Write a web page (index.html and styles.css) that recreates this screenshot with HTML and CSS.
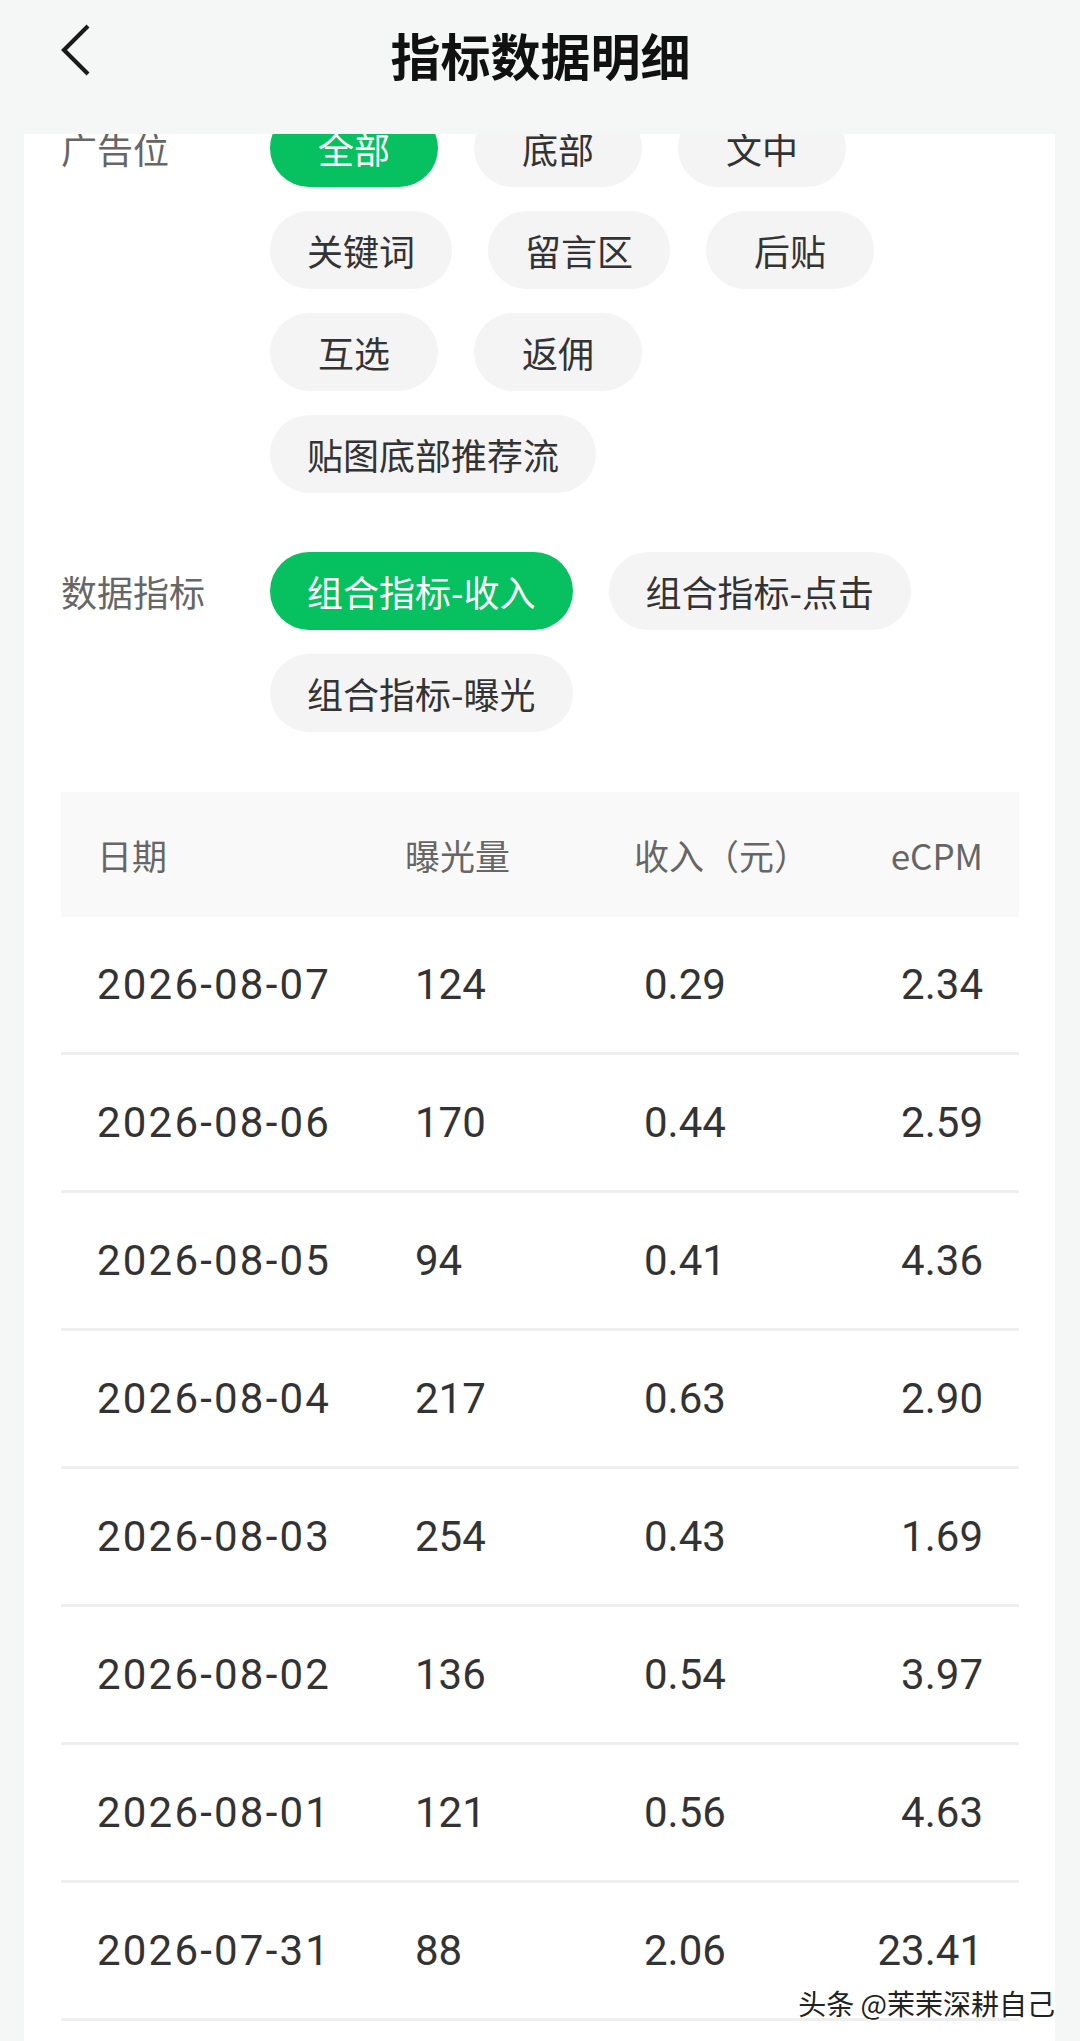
FILE: index.html
```html
<!DOCTYPE html>
<html lang="zh">
<head>
<meta charset="utf-8">
<title>指标数据明细</title>
<link rel="stylesheet" href="styles.css">
</head>
<body>
<header class="topbar">
  <div class="back">
    <svg width="32" height="54" viewBox="0 0 32 54"><path d="M27 2 L3 26 L27 50" fill="none" stroke="#1a1a1a" stroke-width="4.2" stroke-linecap="butt" stroke-linejoin="miter"/></svg>
  </div>
  <h1 class="title">指标数据明细</h1>
  <div class="spacer"></div>
</header>
<main class="card">
  <div class="content">
    <section class="filter">
      <div class="label">广告位</div>
      <div class="pills">
        <span class="pill active">全部</span>
        <span class="pill">底部</span>
        <span class="pill">文中</span>
        <span class="pill">关键词</span>
        <span class="pill">留言区</span>
        <span class="pill">后贴</span>
        <span class="pill">互选</span>
        <span class="pill">返佣</span>
        <span class="pill">贴图底部推荐流</span>
      </div>
    </section>
    <section class="filter second">
      <div class="label">数据指标</div>
      <div class="pills">
        <span class="pill active">组合指标-收入</span>
        <span class="pill">组合指标-点击</span>
        <span class="pill">组合指标-曝光</span>
      </div>
    </section>
    <section class="table">
      <div class="thead">
        <span>日期</span><span>曝光量</span><span>收入（元）</span><span class="r">eCPM</span>
      </div>
      <div class="row"><span class="date">2026-08-07</span><span>124</span><span>0.29</span><span class="r">2.34</span></div>
      <div class="row"><span class="date">2026-08-06</span><span>170</span><span>0.44</span><span class="r">2.59</span></div>
      <div class="row"><span class="date">2026-08-05</span><span>94</span><span>0.41</span><span class="r">4.36</span></div>
      <div class="row"><span class="date">2026-08-04</span><span>217</span><span>0.63</span><span class="r">2.90</span></div>
      <div class="row"><span class="date">2026-08-03</span><span>254</span><span>0.43</span><span class="r">1.69</span></div>
      <div class="row"><span class="date">2026-08-02</span><span>136</span><span>0.54</span><span class="r">3.97</span></div>
      <div class="row"><span class="date">2026-08-01</span><span>121</span><span>0.56</span><span class="r">4.63</span></div>
      <div class="row"><span class="date">2026-07-31</span><span>88</span><span>2.06</span><span class="r">23.41</span></div>
    </section>
  </div>
</main>
<div class="watermark">头条 @茉茉深耕自己</div>
</body>
</html>
```
FILE: styles.css
```css
* { box-sizing: border-box; }
html, body { margin: 0; padding: 0; }
body {
  width: 1080px;
  height: 2041px;
  overflow: hidden;
  position: relative;
  background: #f5f6f6;
  font-family: "Noto Sans CJK SC", "Noto Sans", sans-serif;
  display: flex;
  flex-direction: column;
}
.topbar {
  height: 134px;
  flex: none;
  display: grid;
  grid-template-columns: 1fr auto 1fr;
  align-items: start;
  padding: 0 0 0 61px;
}
.back { padding-top: 24px; }
.back svg { display: block; }
.title {
  margin: 0;
  padding-top: 29px;
  font-size: 50px;
  line-height: 50px;
  font-weight: 700;
  color: #111;
  letter-spacing: 0;
  transform: translateX(-30px);
}
.card {
  flex: 1;
  margin: 0 25px 0 24px;
  background: #fff;
  overflow: hidden;
}
.content {
  margin-top: -25px;
  padding: 0 36px 0 37px;
}
.filter {
  display: grid;
  grid-template-columns: 209px 1fr;
  align-items: start;
}
.filter.second { margin-top: 59px; }
.label {
  font-size: 36px;
  line-height: 78px;
  color: #666;
}
.pills {
  display: flex;
  flex-wrap: wrap;
  column-gap: 36px;
  row-gap: 24px;
  max-width: 700px;
}
.pill {
  height: 78px;
  line-height: 78px;
  min-width: 168px;
  padding: 0 37px;
  border-radius: 39px;
  background: #f4f4f4;
  color: #333;
  font-size: 36px;
  text-align: center;
  white-space: nowrap;
}
.pill.active {
  background: #07c160;
  color: #fff;
}
.table { margin-top: 60px; }
.thead, .row {
  display: grid;
  align-items: center;
  padding: 0 36px;
}
.thead {
  height: 125px;
  background: #f9f9f9;
  grid-template-columns: 308px 229px 1fr auto;
  font-size: 35px;
  color: #666;
}
.row {
  height: 138px;
  border-bottom: 3px solid #efefef;
  grid-template-columns: 318px 229px 1fr auto;
  font-family: Roboto, "Noto Sans", sans-serif;
  font-size: 42px;
  color: #333;
}
.date { letter-spacing: 2.2px; }
.r { text-align: right; }
.watermark {
  position: absolute;
  right: 25px;
  bottom: 22px;
  font-size: 28px;
  line-height: 32px;
  color: #222;
  text-shadow: 1px 1px 0 #fff, -1px 0 0 #fff;
}
```
